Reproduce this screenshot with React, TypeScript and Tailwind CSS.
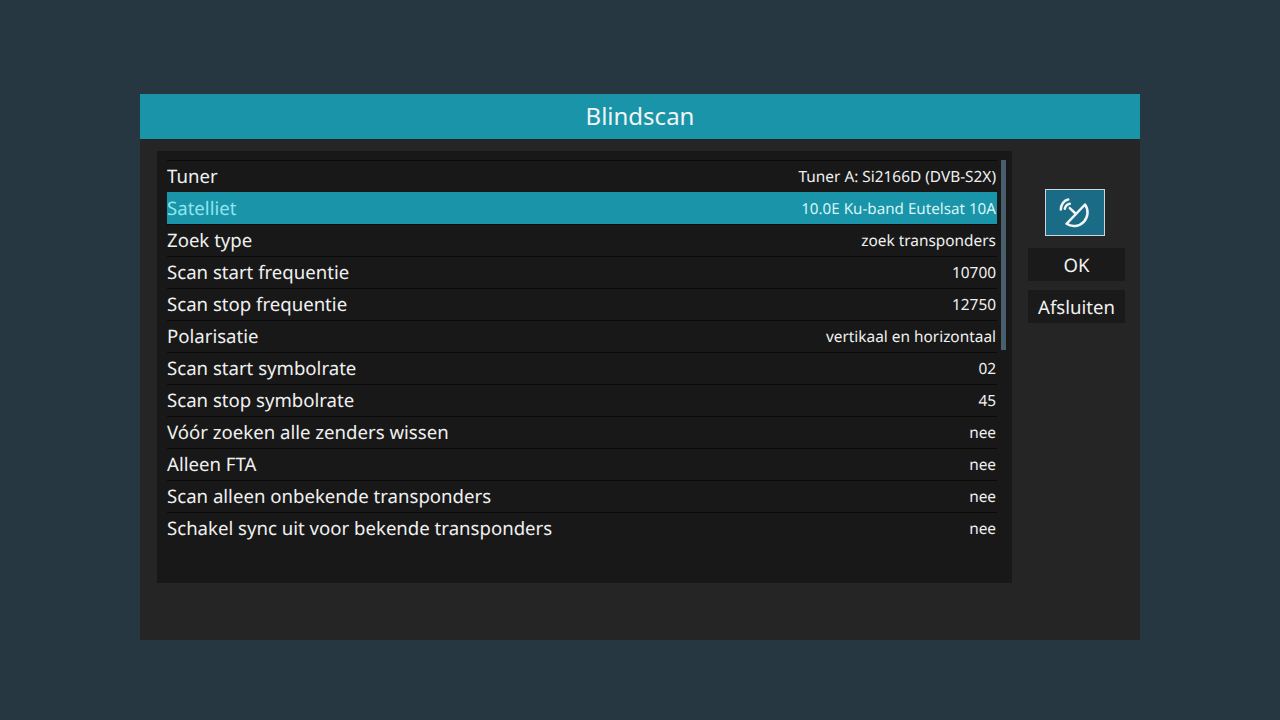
const rows = [
  { label: "Tuner", value: "Tuner A: Si2166D (DVB-S2X)" },
  { label: "Satelliet", value: "10.0E Ku-band Eutelsat 10A", active: true },
  { label: "Zoek type", value: "zoek transponders" },
  { label: "Scan start frequentie", value: "10700" },
  { label: "Scan stop frequentie", value: "12750" },
  { label: "Polarisatie", value: "vertikaal en horizontaal" },
  { label: "Scan start symbolrate", value: "02" },
  { label: "Scan stop symbolrate", value: "45" },
  { label: "Vóór zoeken alle zenders wissen", value: "nee" },
  { label: "Alleen FTA", value: "nee" },
  { label: "Scan alleen onbekende transponders", value: "nee" },
  { label: "Schakel sync uit voor bekende transponders", value: "nee" },
];

function DishIcon() {
  return (
    <svg width="36" height="36" viewBox="-1.5 0 36 36" fill="none" stroke="#f2f5f5" strokeWidth="2.5" strokeLinecap="round" strokeLinejoin="round">
      <path d="M8 28.8 L26.5 9.5 A13.6 13.6 0 0 1 8 28.8 Z" />
      <path d="M17.5 19 L11.3 13.2" />
      <path d="M6.3 13.8 C6.8 11.5 8.8 9.3 11.3 8.8" />
      <path d="M2.3 14.5 C2.3 9.5 5.5 5.2 9.7 4.5" />
    </svg>
  );
}

export default function App() {
  return (
    <div className="h-[720px] w-[1280px] overflow-hidden bg-[#263741] pl-[140px] pt-[94px] font-['Noto_Sans',sans-serif]">
      <div className="h-[546px] w-[1000px] bg-[#252525]">
        <div className="flex h-[45px] items-center justify-center bg-[#1a94a8] pb-[1px] text-[24px] text-[#f0f4f4]">
          Blindscan
        </div>

        <div className="flex pl-[17px] pt-[12px]">
          <div className="flex h-[432px] w-[855px] bg-[#181818] pl-[10px] pt-[9px]">
            <div className="w-[830px]">
              {rows.map((row) => (
                <div
                  key={row.label}
                  className={`flex h-[32px] items-center justify-between border-t pr-px ${
                    row.active
                      ? "border-transparent bg-[#1a94a8] text-[#8fe6ee]"
                      : "border-[#0a0a0a] text-[#f0f0f0]"
                  }`}
                >
                  <span className="pt-px text-[18.6px] whitespace-nowrap [text-rendering:geometricPrecision]">{row.label}</span>
                  <span className={`pt-px whitespace-nowrap [text-rendering:geometricPrecision] ${row.active ? "text-[15.2px] text-[#d8f4f6]" : "text-[15.4px]"}`}>
                    {row.value}
                  </span>
                </div>
              ))}
            </div>
            <div className="ml-[4px] h-[190px] w-[5px] bg-[#4a5f6e]" />
          </div>

          <div className="ml-[16px] flex w-[97px] flex-col pt-[38px]">
            <div className="ml-[17px] flex h-[47px] w-[60px] items-center justify-center border border-[#c9d6da] bg-[#1a6b85]">
              <DishIcon />
            </div>
            <div className="mt-[12px] flex h-[33px] w-full items-center justify-center bg-[#1a1a1a] pt-[2px] text-[18.6px] text-[#f0f0f0] [text-rendering:geometricPrecision]">
              OK
            </div>
            <div className="mt-[9px] flex h-[33px] w-full items-center justify-center bg-[#1a1a1a] pt-[2px] text-[18.6px] text-[#f0f0f0] [text-rendering:geometricPrecision]">
              Afsluiten
            </div>
          </div>
        </div>
      </div>
    </div>
  );
}
